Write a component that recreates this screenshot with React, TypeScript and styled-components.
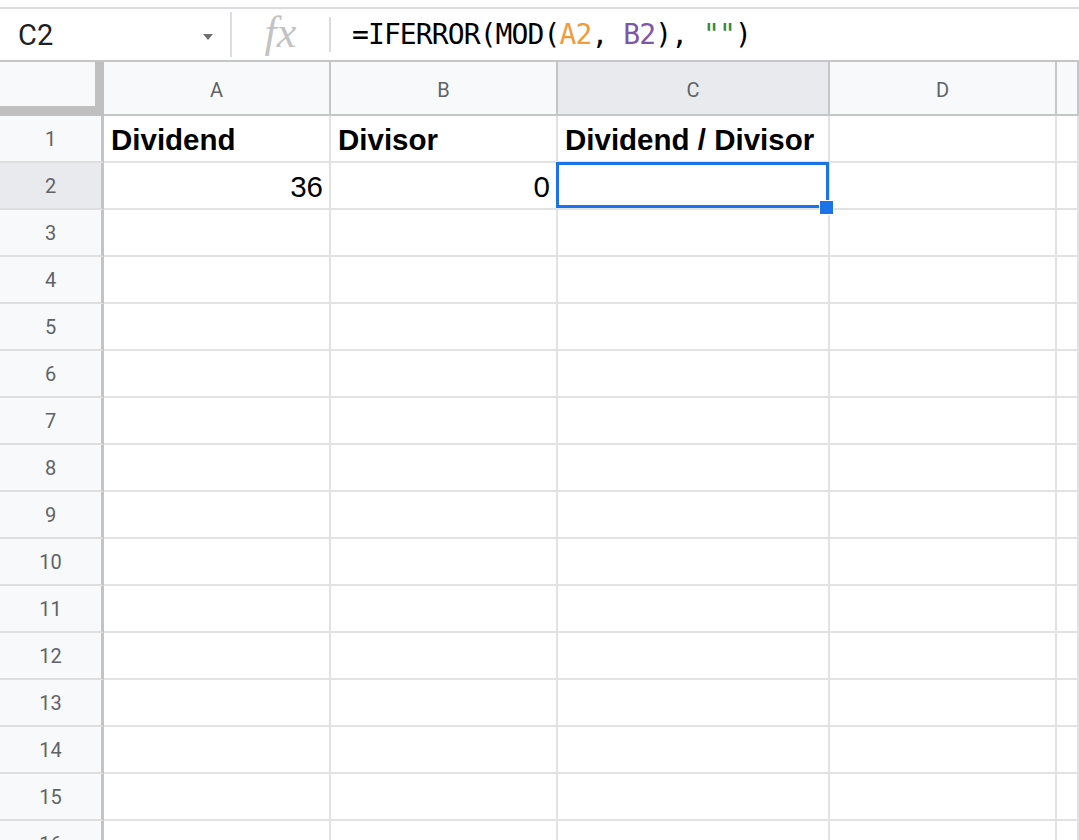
import React from 'react';
import styled, { createGlobalStyle } from 'styled-components';

const GlobalStyle = createGlobalStyle`
    html,
    body {
        margin: 0;
        padding: 0;
        background: #ffffff;
        overflow: hidden;
    }
    body {
        font-family: Roboto, 'Liberation Sans', Arial, sans-serif;
    }
`;

type Align = 'left' | 'right';

interface CellData {
    text: string;
    bold?: boolean;
    align?: Align;
}

const COLUMNS = ['A', 'B', 'C', 'D', ''];
const ROW_COUNT = 16;
const SELECTED = { col: 2, row: 2 };

// sheet contents, keyed by row number then column index
const DATA: Record<number, Record<number, CellData>> = {
    1: {
        0: { text: 'Dividend', bold: true },
        1: { text: 'Divisor', bold: true },
        2: { text: 'Dividend / Divisor', bold: true },
    },
    2: {
        0: { text: '36', align: 'right' },
        1: { text: '0', align: 'right' },
    },
};

const Page = styled.div`
    width: 1079px;
    height: 840px;
    overflow: hidden;
    background: #ffffff;
`;

const TopStrip = styled.div`
    height: 7px;
    border-bottom: 2px solid #dadce0;
`;

const FormulaBar = styled.div`
    display: flex;
    align-items: center;
    height: 51px;
    border-bottom: 2px solid #c6c6c6;
`;

const NameBox = styled.div`
    width: 230px;
    box-sizing: border-box;
    display: flex;
    align-items: center;
    justify-content: space-between;
    padding: 0 17px 0 18px;
    font-family: Roboto, 'Liberation Sans', sans-serif;
    font-size: 29px;
    color: #202124;
`;

const Caret = styled.svg`
    width: 10px;
    height: 6px;
    margin-top: 4px;
`;

const Divider = styled.div<{ $height: number }>`
    width: 2px;
    height: ${({ $height }) => $height}px;
    background: #dadce0;
`;

const FxBox = styled.div`
    width: 97px;
    display: flex;
    justify-content: center;
    align-items: center;
    font-family: 'Liberation Serif', 'DejaVu Serif', serif;
    font-style: italic;
    font-size: 44px;
    color: #c3c3c3;
    line-height: 1;
    padding-bottom: 4px;
`;

const Formula = styled.div`
    padding-left: 21px;
    font-family: 'DejaVu Sans Mono', 'Liberation Mono', monospace;
    font-size: 28px;
    letter-spacing: -0.9px;
    color: #000000;
    white-space: pre;
`;

const Ref = styled.span<{ $color: string }>`
    color: ${({ $color }) => $color};
`;

const Grid = styled.div`
    display: grid;
    grid-template-columns: 104px 227px 227px 272px 227px 1fr;
    grid-template-rows: 54px;
    grid-auto-rows: 47px;
`;

const Corner = styled.div`
    box-sizing: border-box;
    background: #f8f9fa;
    border-right: 9px solid #c0c0c0;
    border-bottom: 10px solid #c0c0c0;
`;

const ColumnHeader = styled.div<{ $selected?: boolean }>`
    box-sizing: border-box;
    display: flex;
    align-items: center;
    justify-content: center;
    padding-top: 4px;
    background: ${({ $selected }) => ($selected ? '#e8eaed' : '#f8f9fa')};
    border-right: 2px solid #c4c7c5;
    border-bottom: 2px solid #c4c7c5;
    font-size: 20px;
    color: #5f6368;
`;

const RowHeader = styled.div<{ $selected?: boolean }>`
    box-sizing: border-box;
    display: flex;
    align-items: center;
    justify-content: center;
    background: ${({ $selected }) => ($selected ? '#e8eaed' : '#f8f9fa')};
    border-right: 3px solid #c4c4c4;
    border-bottom: 2px solid #dedede;
    font-size: 20px;
    color: #5f6368;
`;

const Cell = styled.div<{ $align?: Align; $bold?: boolean; $active?: boolean }>`
    box-sizing: border-box;
    position: ${({ $active }) => ($active ? 'relative' : 'static')};
    z-index: ${({ $active }) => ($active ? 2 : 'auto')};
    display: flex;
    align-items: flex-end;
    justify-content: ${({ $align }) => ($align === 'right' ? 'flex-end' : 'flex-start')};
    padding: 0 6px 4px 7px;
    border-right: 2px solid #e2e2e2;
    border-bottom: 2px solid #e2e2e2;
    font-family: 'Liberation Sans', Arial, sans-serif;
    font-size: 29.5px;
    font-weight: ${({ $bold }) => ($bold ? 700 : 400)};
    line-height: 1.15;
    color: #000000;
    white-space: nowrap;
`;

const Selection = styled.div`
    position: absolute;
    left: -2px;
    top: -1px;
    right: -1px;
    bottom: 0;
    border: 3px solid #1a73e8;
    pointer-events: none;
`;

const FillHandle = styled.div`
    position: absolute;
    right: -7px;
    bottom: -9px;
    width: 13px;
    height: 13px;
    background: #1a73e8;
    box-shadow: 0 0 0 1px #ffffff;
`;

const App = () => {
    const rows = Array.from({ length: ROW_COUNT }, (_, i) => i + 1);

    return (
        <Page>
            <GlobalStyle />
            <TopStrip />
            <FormulaBar>
                <NameBox>
                    <span>C2</span>
                    <Caret viewBox="0 0 10 6">
                        <path d="M0 0 L10 0 L5 6 Z" fill="#6f6f6f" />
                    </Caret>
                </NameBox>
                <Divider $height={45} />
                <FxBox>fx</FxBox>
                <Divider $height={35} />
                <Formula>
                    =IFERROR(MOD(<Ref $color="#f09b3e">A2</Ref>, <Ref $color="#7e57a8">B2</Ref>),{' '}
                    <Ref $color="#2e8b3a">""</Ref>)
                </Formula>
            </FormulaBar>
            <Grid>
                <Corner />
                {COLUMNS.map((col, i) => (
                    <ColumnHeader key={`h-${i}`} $selected={i === SELECTED.col}>
                        {col}
                    </ColumnHeader>
                ))}
                {rows.map((row) => (
                    <React.Fragment key={row}>
                        <RowHeader $selected={row === SELECTED.row}>{row}</RowHeader>
                        {COLUMNS.map((_, ci) => {
                            const data = DATA[row]?.[ci];
                            const active = row === SELECTED.row && ci === SELECTED.col;
                            return (
                                <Cell key={ci} $align={data?.align} $bold={data?.bold} $active={active}>
                                    {data?.text}
                                    {active && (
                                        <Selection>
                                            <FillHandle />
                                        </Selection>
                                    )}
                                </Cell>
                            );
                        })}
                    </React.Fragment>
                ))}
            </Grid>
        </Page>
    );
};

export default App;
